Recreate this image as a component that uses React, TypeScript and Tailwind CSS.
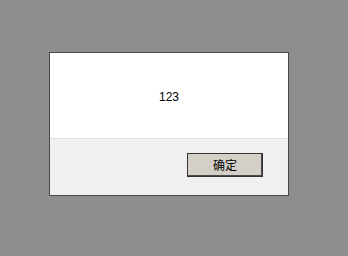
import React from "react";

export default function App() {
  return (
    <div className="w-[348px] h-[256px] bg-[#8e8e8e] pl-[49px] pt-[52px] font-['Liberation_Sans','Noto_Sans_CJK_SC',sans-serif]">
      {/* Alert dialog */}
      <div className="w-[240px] h-[144px] border border-[#4a4a4a] bg-white flex flex-col">
        <div className="h-[85px] flex items-center justify-center pt-[2px] text-[12px] text-black">
          123
        </div>
        <div className="flex-1 bg-[#f0f0f0] border-t border-[#e2e2e2] flex justify-end items-start pt-[14px] pr-[25px]">
          <button className="w-[76px] h-[24px] bg-[#d4d0c8] border border-[#333333] shadow-[inset_-1px_-1px_0_#4a4a4a] text-[12px] text-black flex items-center justify-center font-['Noto_Sans_CJK_SC',sans-serif]">
            确定
          </button>
        </div>
      </div>
    </div>
  );
}
